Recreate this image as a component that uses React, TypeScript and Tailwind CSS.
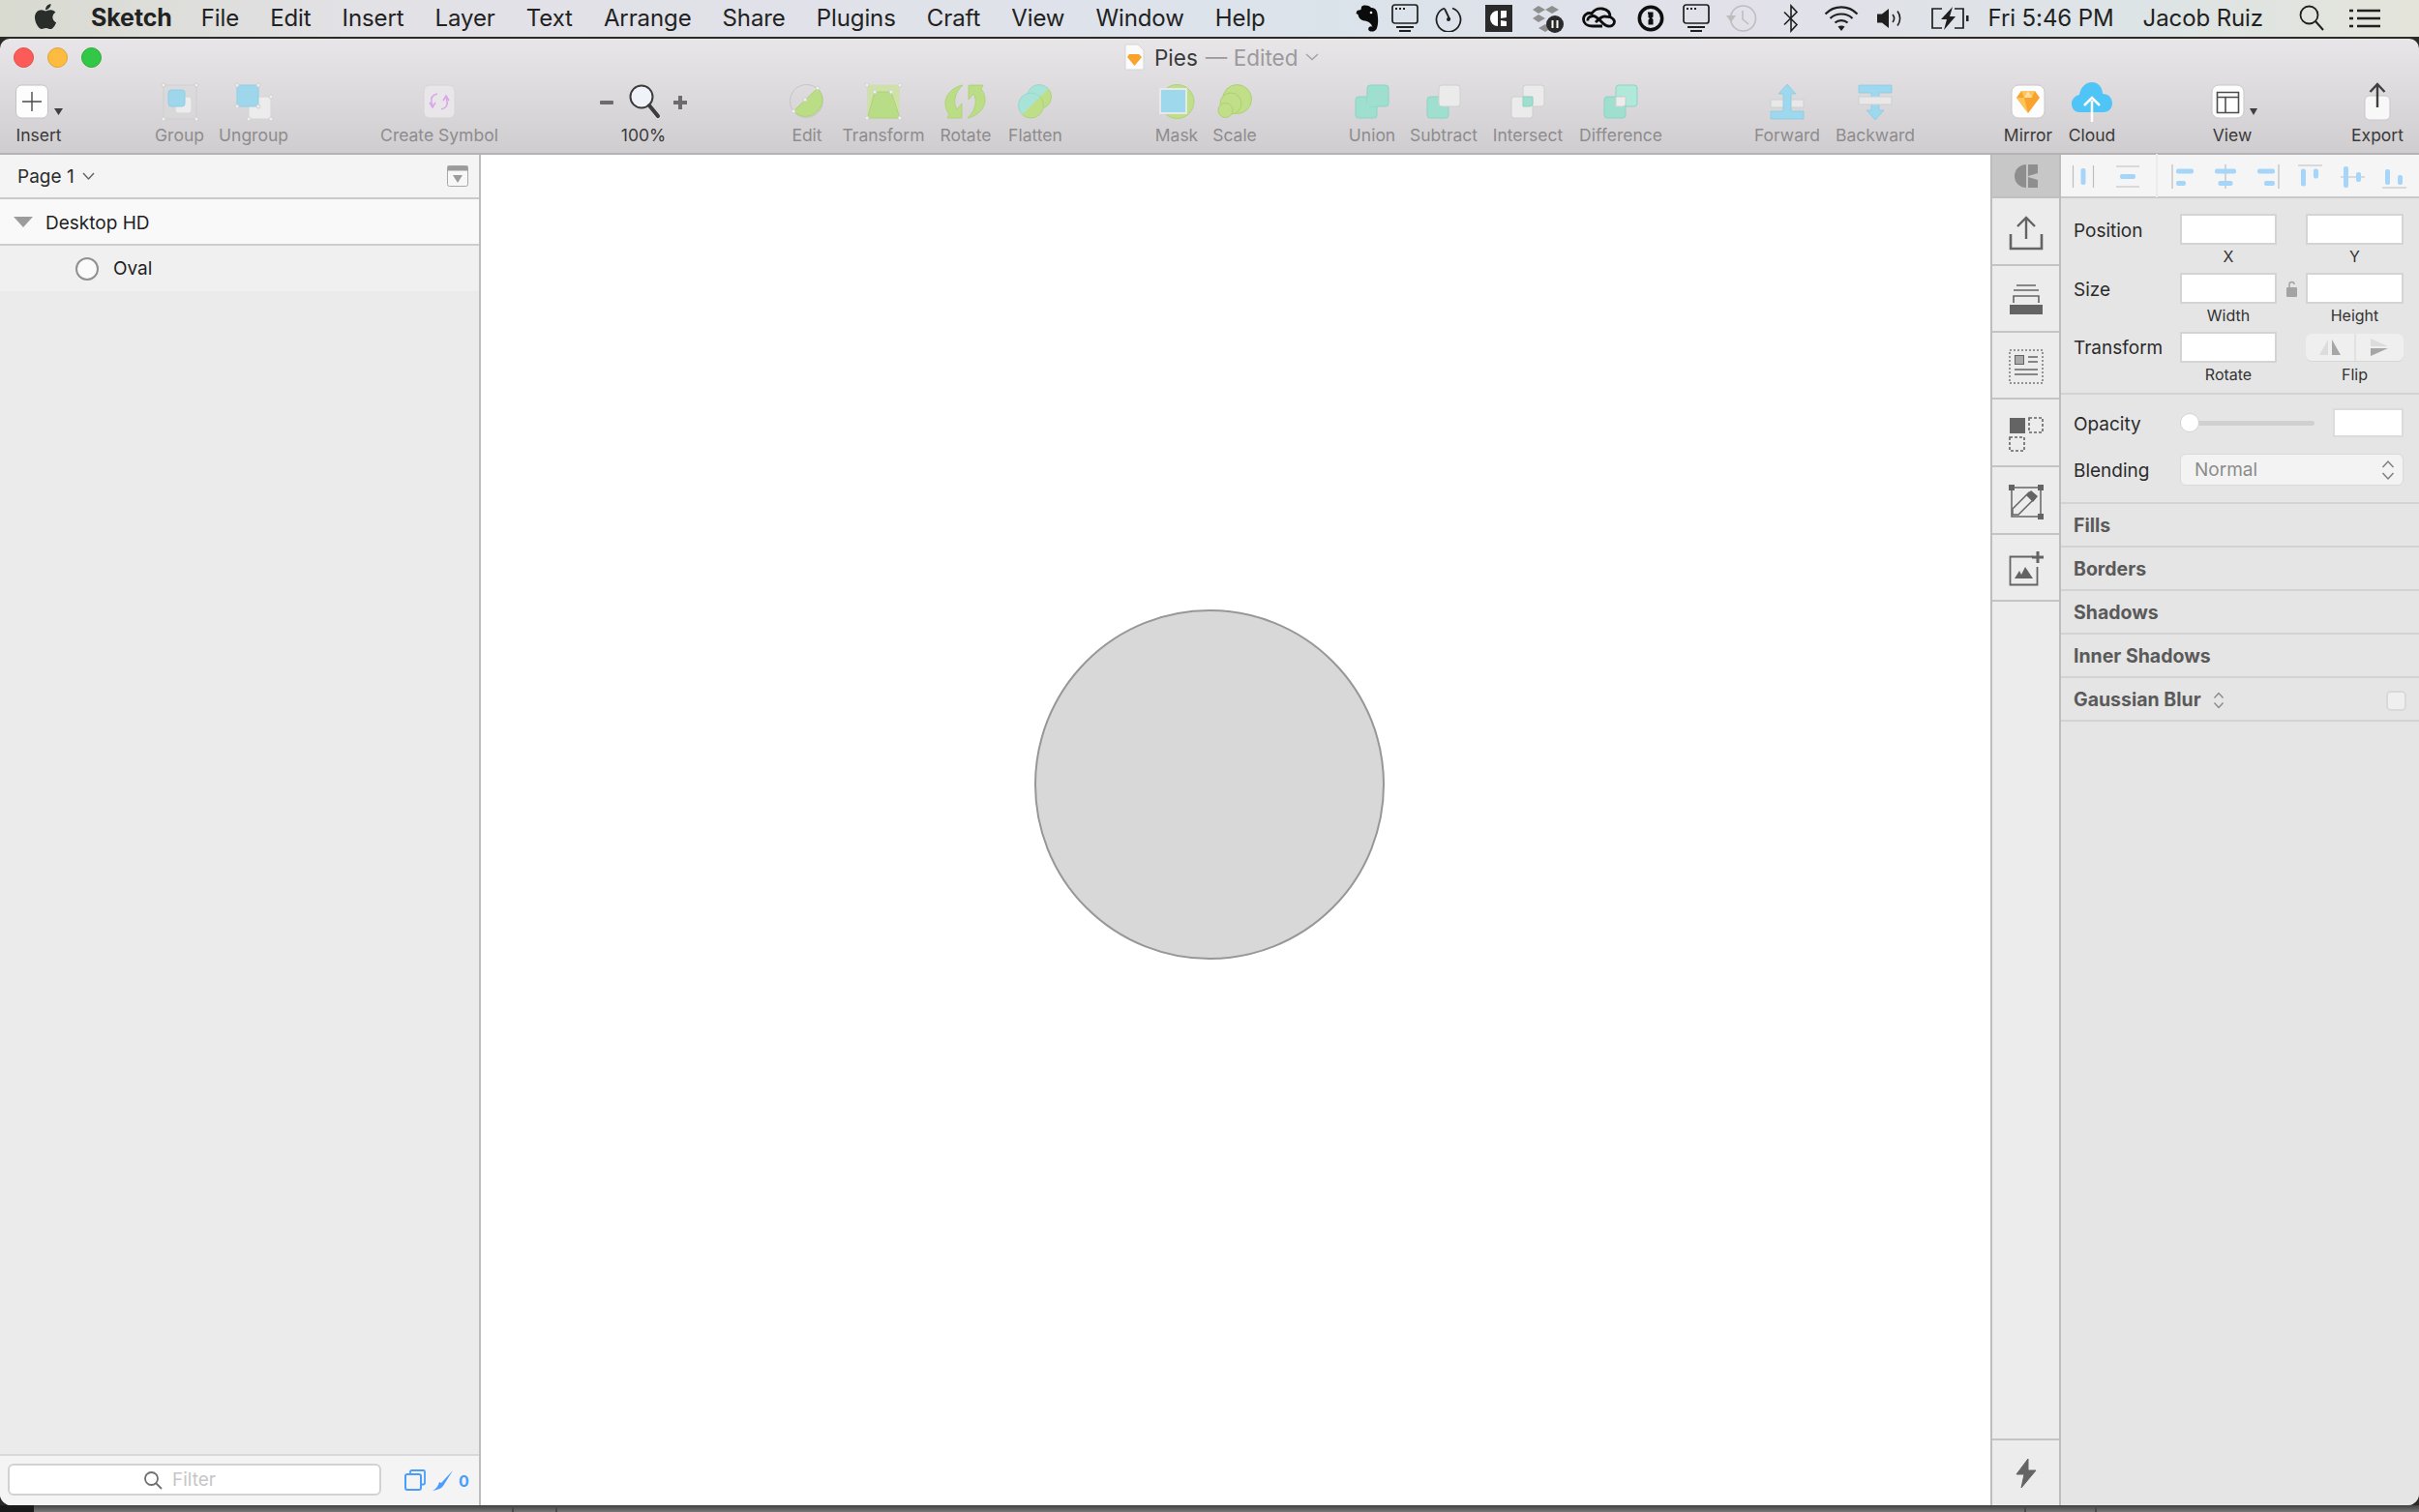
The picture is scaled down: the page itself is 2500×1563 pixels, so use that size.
import * as React from "react";
import { FaApple } from "react-icons/fa";

const ON = "text-[#3a3a3a]";
const OFF = "text-[#8e8c8e]";

function Dot({ x, y }: { x: number; y: number }) {
  return <circle cx={x} cy={y} r="2" fill="#f1f1f1" stroke="#cfcfcf" strokeWidth="1" />;
}

function Ic({ w, h, children }: { w: number; h: number; children: React.ReactNode }) {
  return (
    <svg width={w} height={h} viewBox={`0 0 ${w} ${h}`} className="block flex-none">
      {children}
    </svg>
  );
}

const InsertIcon = () => (
  <Ic w={52} h={36}>
    <rect x="2.500" y="1" width="33" height="34" rx="6" fill="#fdfdfd" stroke="#c4c2c4" />
    <path d="M19 8v20M9 18h20" stroke="#4a4a4a" strokeWidth="1.400" />
    <path d="M42 25h9l-4.500 7z" fill="#3f3f3f" />
  </Ic>
);
const GroupIcon = () => (
  <Ic w={40} h={40}>
    <rect x="3" y="3" width="34" height="35" fill="#dad9da" fillOpacity=".5" stroke="#cfcdcf" />
    <rect x="15" y="15" width="17" height="17" rx="3" fill="#ececec" stroke="#d5d5d5" />
    <rect x="8" y="8" width="17" height="17" rx="3" fill="#9ed7ec" stroke="#8fcde4" />
    <Dot x={3} y={3} /><Dot x={37} y={3} /><Dot x={3} y={38} /><Dot x={37} y={38} />
  </Ic>
);
const UngroupIcon = () => (
  <Ic w={40} h={40}>
    <rect x="15" y="15" width="23" height="23" fill="#ececec" stroke="#d5d5d5" />
    <rect x="3" y="3" width="22" height="22" rx="2" fill="#9ed7ec" stroke="#8fcde4" />
    <Dot x={3} y={3} /><Dot x={25} y={3} /><Dot x={3} y={25} /><Dot x={25} y={25} />
    <Dot x={38} y={15} /><Dot x={15} y={38} /><Dot x={38} y={38} />
  </Ic>
);
const SymbolIcon = () => (
  <Ic w={34} h={36}>
    <rect x="1" y="1" width="32" height="34" rx="6" fill="#e8e6e8" stroke="#d6d4d6" />
    <path d="M15 10c-5 1-7 4-6 9l1 4M19 26c5-1 7-4 6-9l-1-4" fill="none" stroke="#d9a6ea" strokeWidth="1.600" />
    <path d="M7 19l3 5 3-5M21 17l3-5 3 5" fill="none" stroke="#d9a6ea" strokeWidth="1.600" />
  </Ic>
);
const ZoomIcon = () => (
  <Ic w={92} h={38}>
    <rect x="1" y="18" width="14" height="4" rx="1" fill="#6d6c6d" />
    <circle cx="44" cy="14" r="11.500" fill="#f0f2fa" stroke="#3c3c3c" strokeWidth="2" />
    <path d="M52 23l9 11" stroke="#3c3c3c" strokeWidth="4" strokeLinecap="round" />
    <path d="M84 13v14M77 20h14" stroke="#6d6c6d" strokeWidth="4" />
  </Ic>
);
const EditIcon = () => (
  <Ic w={36} h={36}>
    <circle cx="17.500" cy="17.500" r="17" fill="none" stroke="#c6c5c6" strokeWidth="1" />
    <path d="M4 28L29 4A17 17 0 0 1 4 28Z" fill="#bbdd85" stroke="#acd273" />
    <Dot x={4} y={28} /><Dot x={16} y={16} /><Dot x={29} y={4} />
  </Ic>
);
const TransformIcon = () => (
  <Ic w={38} h={38}>
    <rect x="2.500" y="2" width="33" height="34" fill="#cfe2a5" stroke="#d5d7c8" />
    <path d="M10 9h17l9 27H2.500z" fill="#b9dd86" stroke="#aed27a" />
    <Dot x={2} y={2} /><Dot x={36} y={2} /><Dot x={2} y={36} /><Dot x={36} y={36} />
    <Dot x={10} y={9} /><Dot x={27} y={9} />
  </Ic>
);
const RotateIcon = () => (
  <Ic w={44} h={36}>
    <g fill="#bbdd85" stroke="#abd173" strokeWidth=".8">
      <path d="M19 1C8 3 0 12 1 21c.5 5 2 8 4 10l-2 4h15V20l-5 6c-4-6-3-17 6-25z" />
      <path transform="rotate(180 21.500 18)" d="M19 1C8 3 0 12 1 21c.5 5 2 8 4 10l-2 4h15V20l-5 6c-4-6-3-17 6-25z" />
    </g>
  </Ic>
);
const FlattenIcon = () => (
  <Ic w={36} h={36}>
    <defs>
      <clipPath id="fl1"><path d="M0 0h36L0 36z" /></clipPath>
      <clipPath id="fl2"><path d="M36 0v36H0z" /></clipPath>
    </defs>
    <g clipPath="url(#fl1)" fill="#a7e3d8" stroke="#9ad7cb">
      <circle cx="22" cy="13" r="12.500" /><circle cx="13.500" cy="22" r="13" />
    </g>
    <g clipPath="url(#fl2)" fill="#bfde88" stroke="#aed27a">
      <circle cx="22" cy="13" r="12.500" /><circle cx="13.500" cy="22" r="13" />
    </g>
  </Ic>
);
const MaskIcon = () => (
  <Ic w={38} h={36}>
    <circle cx="19.500" cy="18" r="17.500" fill="#bfdf88" stroke="#aed27a" />
    <rect x="2" y="5" width="27" height="25" fill="#9ed8ec" stroke="#e8e8e8" strokeWidth="2" />
  </Ic>
);
const ScaleIcon = () => (
  <Ic w={36} h={36}>
    <g fill="#c0df88" stroke="#abd074">
      <circle cx="20.500" cy="15.500" r="15" />
      <circle cx="14" cy="20" r="11" />
      <circle cx="8.500" cy="27" r="7.500" />
    </g>
  </Ic>
);
const TEAL = "#9fdfd0";
const UnionIcon = () => (
  <Ic w={36} h={36}>
    <g fill={TEAL} stroke="#8fd3c2">
      <rect x="1" y="13" width="22" height="22" rx="3" />
      <rect x="13" y="1" width="22" height="22" rx="3" />
    </g>
    <rect x="13" y="13" width="10" height="10" fill={TEAL} />
  </Ic>
);
const SubtractIcon = () => (
  <Ic w={36} h={36}>
    <rect x="1" y="13" width="22" height="22" rx="3" fill={TEAL} stroke="#8fd3c2" />
    <rect x="13" y="1" width="22" height="22" rx="3" fill="#ebebeb" stroke="#cfcfcf" />
  </Ic>
);
const IntersectIcon = () => (
  <Ic w={36} h={36}>
    <rect x="13" y="1" width="22" height="22" rx="3" fill="#ebebeb" stroke="#cfcfcf" />
    <rect x="1" y="13" width="22" height="22" rx="3" fill="#ebebeb" stroke="#cfcfcf" />
    <path d="M13 13h10v7a3 3 0 0 1-3 3h-7z" fill={TEAL} stroke="#8fd3c2" />
  </Ic>
);
const DifferenceIcon = () => (
  <Ic w={36} h={36}>
    <rect x="13" y="1" width="22" height="22" rx="3" fill="#b0e8da" stroke="#8fd3c2" />
    <rect x="1" y="13" width="22" height="22" rx="3" fill={TEAL} stroke="#8fd3c2" />
    <path d="M13 13h10v7a3 3 0 0 1-3 3h-7z" fill="#ececec" stroke="#cfcfcf" />
  </Ic>
);
const ForwardIcon = () => (
  <Ic w={36} h={37}>
    <rect x="1" y="16" width="34" height="8" fill="#e8e8e8" stroke="#cfcfcf" />
    <path d="M18 0l9 10h-5v18h13v8H1v-8h13V10H9z" fill="#9ed8ee" stroke="#8ccbe2" strokeWidth=".8" />
  </Ic>
);
const BackwardIcon = () => (
  <Ic w={36} h={37}>
    <path d="M1 1h34v8H22v18h5l-9 10-9-10h5V9H1z" fill="#9ed8ee" stroke="#8ccbe2" strokeWidth=".8" />
    <rect x="1" y="13" width="34" height="8" fill="#e8e8e8" stroke="#cfcfcf" />
  </Ic>
);
const MirrorIcon = () => (
  <Ic w={36} h={36}>
    <rect x="1" y="1" width="34" height="34" rx="7" fill="#fdfdfd" stroke="#c9c7c9" />
    <path d="M11 7h14l5 7-12 16L6 14z" fill="#f9a22c" />
    <path d="M11 7h14l-3 7h-8zM6 14h8l4 16z" fill="#fdc458" />
    <path d="M14 14h8l-4-7z" fill="#feddaa" />
  </Ic>
);
const CloudIcon = () => (
  <Ic w={44} h={42}>
    <path d="M22 1c7 0 11 6 11 12 6 0 10 4 10 10 0 5-4 9-9 9H9c-5 0-8-4-8-9 0-4 3-8 8-9 1-7 6-13 13-13z" fill="#4fc4f6" />
    <path d="M22 42V20M14 25l8-8 8 8" fill="none" stroke="#fff" strokeWidth="2.500" />
  </Ic>
);
const ViewIcon = () => (
  <Ic w={52} h={36}>
    <rect x="5" y="1" width="33" height="34" rx="7" fill="#fdfdfd" stroke="#c9c7c9" />
    <path d="M10.500 8.500h22v21h-22zM10.500 13.500h22M19 13.500v16" fill="none" stroke="#4d4d4d" strokeWidth="1.600" />
    <path d="M44 25h8l-4 7z" fill="#3f3f3f" />
  </Ic>
);
const ExportIcon = () => (
  <Ic w={30} h={40}>
    <rect x="2" y="14" width="26" height="25" rx="5" fill="#f8f8f8" stroke="#c9c7c9" />
    <path d="M15 26V2M7.500 10L15 2l7.500 8" fill="none" stroke="#3f3f3f" strokeWidth="2.400" />
  </Ic>
);

type Tool = { label: string; on?: boolean; w: string; gap?: string; icon: React.ReactNode };

const TOOLS: Tool[] = [
  { label: "Insert", on: true, w: "w-[80px]", icon: <InsertIcon /> },
  { label: "Group", w: "w-[77px]", gap: "ml-[67px]", icon: <GroupIcon /> },
  { label: "Ungroup", w: "w-[76px]", icon: <UngroupIcon /> },
  { label: "Create Symbol", w: "w-[140px]", gap: "ml-[84px]", icon: <SymbolIcon /> },
  { label: "100%", on: true, w: "w-[100px]", gap: "ml-[91px]", icon: <ZoomIcon /> },
  { label: "Edit", w: "w-[70px]", gap: "ml-[84px]", icon: <EditIcon /> },
  { label: "Transform", w: "w-[88px]", icon: <TransformIcon /> },
  { label: "Rotate", w: "w-[82px]", icon: <RotateIcon /> },
  { label: "Flatten", w: "w-[62px]", icon: <FlattenIcon /> },
  { label: "Mask", w: "w-[60px]", gap: "ml-[85px]", icon: <MaskIcon /> },
  { label: "Scale", w: "w-[60px]", icon: <ScaleIcon /> },
  { label: "Union", w: "w-[74px]", gap: "ml-[75px]", icon: <UnionIcon /> },
  { label: "Subtract", w: "w-[74px]", icon: <SubtractIcon /> },
  { label: "Intersect", w: "w-[100px]", icon: <IntersectIcon /> },
  { label: "Difference", w: "w-[92px]", icon: <DifferenceIcon /> },
  { label: "Forward", w: "w-[92px]", gap: "ml-[80px]", icon: <ForwardIcon /> },
  { label: "Backward", w: "w-[90px]", icon: <BackwardIcon /> },
  { label: "Mirror", on: true, w: "w-[72px]", gap: "ml-[77px]", icon: <MirrorIcon /> },
  { label: "Cloud", on: true, w: "w-[60px]", icon: <CloudIcon /> },
  { label: "View", on: true, w: "w-[80px]", gap: "ml-[75px]", icon: <ViewIcon /> },
  { label: "Export", on: true, w: "w-[80px]", gap: "ml-[70px]", icon: <ExportIcon /> },
];

const S = "#1f1f1f";

function MenuScreen() {
  return (
    <Ic w={28} h={30}>
      <rect x="1" y="1" width="26" height="19" rx="2.500" fill="none" stroke={S} strokeWidth="1.700" />
      <path d="M4 5h2M8 5h2M12 5h2" stroke={S} strokeWidth="2" />
      <path d="M5 24h18M8 28h12" stroke={S} strokeWidth="1.800" />
    </Ic>
  );
}

const StatusIcons = () => (
  <div className="flex items-center">
    <Ic w={24} h={28}>
      <path d="M6 2.500C6 1 8 .5 10 .5c3 0 5 1 6 2.500 3.500 0 6 2 6.500 6 1 6 1 11-.5 15-1 3-4 4-6.500 3.500s-3-3-1.500-4.500c1-1 3-1 3.500.5-1-4.500-4.500-6.500-8-7C5 16 3 13 2.500 10L.5 9l1-3 4-1z" fill="#0b0b0b" />
      <circle cx="16" cy="8" r="1.300" fill="#fff" />
    </Ic>
    <div className="ml-[13px]">
      <MenuScreen />
    </div>
    <div className="ml-[17px]">
      <Ic w={28} h={28}>
        <path d="M10 3.500A12.500 12.500 0 1 0 18 3.500" fill="none" stroke={S} strokeWidth="1.800" />
        <path d="M10 4l5.500 11.500" stroke={S} strokeWidth="1.800" />
        <circle cx="14" cy="15" r="2" fill={S} />
      </Ic>
    </div>
    <div className="ml-[24px]">
      <Ic w={28} h={28}>
        <rect width="28" height="28" fill="#2a2a2a" />
        <path d="M13 6a8 8 0 0 0 0 16z M16 6h6v7l-6 1zM16 16l6 1v5h-6z" fill="#fff" />
      </Ic>
    </div>
    <div className="ml-[21px]">
      <Ic w={33} h={30}>
        <g fill="#8f8f8f">
          <path d="M6 2l7 4-7 4-6-4zM20 2l7 4-7 4-7-4zM6 11l7 4-7 4-6-4zM13 21l6 4-6 4-7-4z" />
        </g>
        <circle cx="23" cy="21" r="9" fill="#2a2a2a" />
        <path d="M20.500 17v8M25.500 17v8" stroke="#fff" strokeWidth="2" />
      </Ic>
    </div>
    <div className="ml-[18px]">
      <Ic w={35} h={24}>
        <g fill="none" stroke="#0d0d0d" strokeWidth="2.800">
          <path d="M21 20H10.500C5 20 1.500 17 1.500 13 1.500 8 6 5.500 10 7 13 2.500 17 1.500 21 2c5 .8 8 4 8 8.500 3 1.500 4.500 3.500 4.500 5 0 3-3 5-6.500 4.500C21 19.500 17 9 11 9.500 7 10 5.500 12.500 6 14.500" />
          <path d="M14 16c3-3 6-6 9-6 2.500 0 4.500 .5 6 .5" />
        </g>
      </Ic>
    </div>
    <div className="ml-[22px]">
      <Ic w={28} h={28}>
        <circle cx="14" cy="14" r="11.700" fill="none" stroke="#0e0e0e" strokeWidth="3.500" />
        <path d="M11 7.500h5.500v5l-1.500 1 1.500 1.500v5.500H11.500v-5l1.500-1.500-1.500-1v-3.500H11z" fill="#0e0e0e" />
      </Ic>
    </div>
    <div className="ml-[19px]">
      <MenuScreen />
    </div>
    <div className="ml-[17px]">
      <Ic w={32} h={32}>
        <circle cx="17.500" cy="16" r="13" fill="none" stroke="#bdbdbd" strokeWidth="1.600" />
        <path d="M0 13h10l-5 7z" fill="#bdbdbd" />
        <path d="M17 8v9l6 5" fill="none" stroke="#bdbdbd" strokeWidth="1.600" />
      </Ic>
    </div>
    <div className="ml-[26px]">
      <Ic w={18} h={30}>
        <path d="M2 8.500l13 13L9 28V2l6 6.500L2 21.500" fill="none" stroke={S} strokeWidth="1.600" />
      </Ic>
    </div>
    <div className="ml-[25px]">
      <Ic w={36} h={28}>
        <g fill="none" stroke={S} strokeWidth="2.200">
          <path d="M1.500 9.500c9-9.500 24-9.500 33 0" />
          <path d="M6.500 14c6-6 17-6 23 0" />
          <path d="M11.500 18.500c3.500-3.300 9.500-3.300 13 0" />
        </g>
        <path d="M14.500 22.500c2-1.500 5-1.500 7 0L18 27z" fill={S} />
      </Ic>
    </div>
    <div className="ml-[18px]">
      <Ic w={29} h={26}>
        <path d="M1 8.500h5L13 3v20l-7-5.500H1z" fill={S} />
        <path d="M17 9c2 2.500 2 5.500 0 8M22 5.500c3.500 4.500 3.500 10.500 0 15" fill="none" stroke={S} strokeWidth="1.600" />
      </Ic>
    </div>
    <div className="ml-[27px]">
      <Ic w={40} h={26}>
        <path d="M12 3H2v20h10M25 3h9v20h-9" fill="none" stroke={S} strokeWidth="1.700" />
        <path d="M23 1L11 14h6l-3 11 12-14h-6z" fill={S} />
        <rect x="37" y="10" width="2.500" height="6" fill={S} />
      </Ic>
    </div>
  </div>
);

const MENUS = ["File", "Edit", "Insert", "Layer", "Text", "Arrange", "Share", "Plugins", "Craft", "View", "Window", "Help"];

function MenuBar() {
  return (
    <div className="h-[40px] flex-none flex items-center border-b-2 border-[#2b2a27] bg-[linear-gradient(90deg,#d9dad0_0%,#e2e1e6_15%,#e0e2ea_40%,#dbe3ea_55%,#e2e1ea_72%,#dde4e6_88%,#e4e4da_100%)] text-[24px] text-[#222] tracking-[-0.1px]">
      <FaApple className="ml-[33px] w-[28px] h-[30px] text-[#2a2e2b] mb-[4px]" />
      <span className="ml-[33px] font-bold text-[25px]">Sketch</span>
      <div className="ml-[30px] flex gap-[32px]">
        {MENUS.map((m) => (
          <span key={m}>{m}</span>
        ))}
      </div>
      <div className="ml-auto flex items-center pr-[40px]">
        <StatusIcons />
        <span className="ml-[20px]">Fri 5:46 PM</span>
        <span className="ml-[30px]">Jacob Ruiz</span>
        <div className="ml-[37px]">
          <Ic w={26} h={28}>
            <circle cx="10.500" cy="10.500" r="9" fill="none" stroke={S} strokeWidth="1.800" />
            <path d="M17 17l8 9" stroke={S} strokeWidth="2" />
          </Ic>
        </div>
        <div className="ml-[26px]">
          <Ic w={32} h={22}>
            <path d="M0 3h4M8 3h24M0 11h4M8 11h24M0 19h4M8 19h24" stroke={S} strokeWidth="2.600" />
          </Ic>
        </div>
      </div>
    </div>
  );
}

function TitleBar() {
  return (
    <div className="h-[38px] flex items-center">
      <div className="w-[1162px] flex-none flex items-center gap-[14px] pl-[14px]">
        <span className="w-[21px] h-[21px] rounded-full bg-[#fc5b57] border border-[#e14942]" />
        <span className="w-[21px] h-[21px] rounded-full bg-[#fdbc40] border border-[#de9f34]" />
        <span className="w-[21px] h-[21px] rounded-full bg-[#33c748] border border-[#27aa35]" />
      </div>
      <Ic w={21} h={28}>
        <path d="M1 1h13l6 6v20H1z" fill="#fbfbfb" stroke="#d5d5d5" />
        <path d="M5 11h10l3 3-7.500 9L3 14z" fill="#f9a22c" />
      </Ic>
      <span className="ml-[10px] pt-[1px] text-[22.500px] text-[#3a3a3a]">Pies</span>
      <span className="ml-[8px] pt-[1px] text-[22.500px] text-[#9b999b]">— Edited</span>
      <svg width="14" height="8" viewBox="0 0 14 8" className="ml-[8px]">
        <path d="M1 1l6 5.500L13 1" fill="none" stroke="#a5a3a5" strokeWidth="1.500" />
      </svg>
    </div>
  );
}

function Toolbar() {
  return (
    <div className="h-[82px] flex border-b-2 border-[#b4b2b4]">
      {TOOLS.map((t) => (
        <div key={t.label} className={`flex-none flex flex-col items-center ${t.w} ${t.gap ?? ""}`}>
          <div className="h-[50px] flex items-center justify-center pt-[4px]">{t.icon}</div>
          <span className={`mt-[1px] text-[17.500px] leading-[22px] whitespace-nowrap ${t.on ? ON : OFF}`}>{t.label}</span>
        </div>
      ))}
    </div>
  );
}

function LayerList() {
  return (
    <aside className="w-[497px] flex-none flex flex-col bg-[#ebebeb] border-r-2 border-[#bdbdbd]">
      <div className="h-[46px] flex-none flex items-center bg-[#f4f4f4] border-b-2 border-[#c9c9c9] pl-[18px] pr-[11px] text-[19px] text-[#2c2c2c]">
        <span className="pt-[2px]">Page 1</span>
        <svg width="13" height="9" viewBox="0 0 13 9" className="ml-[8px]">
          <path d="M1 1l5.500 6L12 1" fill="none" stroke="#666" strokeWidth="1.500" />
        </svg>
        <svg width="22" height="22" viewBox="0 0 22 22" className="ml-auto">
          <rect x=".5" y=".5" width="21" height="21" rx="2" fill="#f7f7f7" stroke="#a9a9a9" />
          <rect x=".5" y=".5" width="21" height="5" fill="#9b9b9b" />
          <path d="M6 10h10l-5 8z" fill="#9b9b9b" />
        </svg>
      </div>
      <div className="h-[48px] flex-none flex items-center bg-[#f9f9f9] border-b-2 border-[#cdcdcd] text-[19px] text-[#1f1f1f]">
        <svg width="20" height="11" viewBox="0 0 20 11" className="ml-[14px]">
          <path d="M0 0h20L10 11z" fill="#9c9c9c" />
        </svg>
        <span className="ml-[13px] pt-[5px]">Desktop HD</span>
      </div>
      <div className="h-[47px] flex-none flex items-center bg-[#f0f0f0] text-[19px] text-[#1f1f1f]">
        <span className="ml-[78px] w-[24px] h-[24px] rounded-full border-2 border-[#909090] bg-[#fafafa]" />
        <span className="ml-[15px] pt-[2px]">Oval</span>
      </div>
      <div className="flex-1" />
      <div className="h-[53px] flex-none flex items-start bg-[#f4f4f4] border-t-2 border-[#d9d9d9] pl-[8px] pt-[8px]">
        <div className="w-[386px] h-[33px] flex items-center gap-[10px] pl-[138px] bg-white border-2 border-[#d2d2d2] rounded-[6px]">
          <svg width="20" height="20" viewBox="0 0 20 20">
            <circle cx="8.500" cy="8.500" r="6.500" fill="none" stroke="#6f6f6f" strokeWidth="1.800" />
            <path d="M13 13l6 6" stroke="#6f6f6f" strokeWidth="1.800" />
          </svg>
          <span className="pt-[2px] text-[19px] text-[#c6c6c6]">Filter</span>
        </div>
        <svg width="22" height="22" viewBox="0 0 22 22" className="ml-[24px] mt-[6px]">
          <path d="M6 4V2.500A1.500 1.500 0 0 1 7.500 1H19.500A1.500 1.500 0 0 1 21 2.500V14a1.500 1.500 0 0 1-1.500 1.500H18" fill="none" stroke="#4a9dff" strokeWidth="1.800" />
          <rect x="1" y="5" width="16" height="16" rx="2" fill="none" stroke="#4a9dff" strokeWidth="2" />
        </svg>
        <svg width="22" height="22" viewBox="0 0 22 22" className="ml-[7px] mt-[6px]">
          <path d="M21 1L11 17c-2 3-6 4-11 5 4-2 6-5 7-9l2 1z" fill="#4a9dff" />
        </svg>
        <span className="ml-[5px] mt-[6px] text-[16px] font-bold text-[#4a9dff]">0</span>
      </div>
    </aside>
  );
}

function Tab({ children, h }: { children: React.ReactNode; h: string }) {
  return <div className={`${h} flex-none flex items-center justify-center border-b-2 border-[#c4c4c4] pt-[3px]`}>{children}</div>;
}

const G = "#646464";

function TabColumn() {
  return (
    <div className="w-[73px] flex-none flex flex-col bg-[#ececec] border-x-2 border-[#bdbdbd]">
      <div className="h-[45px] flex-none flex items-center justify-center bg-[#c7c7c7] border-b-2 border-[#c0c0c0]">
        <svg width="26" height="26" viewBox="0 0 26 26">
          <path d="M13 1A12 12 0 0 0 13 25z" fill="#8e8e8e" />
          <path d="M15 1h10v9l-10 3zM15 14l10 3v8H15z" fill="#8e8e8e" />
        </svg>
      </div>
      <Tab h="h-[70px]">
        <svg width="36" height="36" viewBox="0 0 36 36">
          <path d="M18 24V3M9 11l9-9 9 9" fill="none" stroke={G} strokeWidth="2.400" />
          <path d="M2 19v15h32V19" fill="none" stroke={G} strokeWidth="2.600" />
        </svg>
      </Tab>
      <Tab h="h-[69px]">
        <svg width="36" height="34" viewBox="0 0 36 34">
          <path d="M8 2h20M5 7h26" stroke={G} strokeWidth="1.600" />
          <path d="M5 20v-7h26v7" fill="none" stroke={G} strokeWidth="1.600" />
          <rect x="1" y="22" width="34" height="10" fill={G} />
        </svg>
      </Tab>
      <Tab h="h-[69px]">
        <svg width="36" height="36" viewBox="0 0 36 36">
          <rect x="1" y="1" width="34" height="34" fill="none" stroke="#777" strokeWidth="1.500" strokeDasharray="2 2" />
          <rect x="6.500" y="6.500" width="9" height="9" fill="#a9a9a9" stroke={G} />
          <path d="M20 8h10M20 13h10M6 21h24M6 26h24" stroke={G} strokeWidth="1.400" />
        </svg>
      </Tab>
      <Tab h="h-[70px]">
        <svg width="36" height="36" viewBox="0 0 36 36">
          <rect x="1" y="1" width="16" height="16" fill={G} />
          <rect x="21" y="1" width="14" height="15" fill="none" stroke={G} strokeWidth="1.600" strokeDasharray="3 2" />
          <rect x="1" y="21" width="15" height="14" fill="none" stroke={G} strokeWidth="1.600" strokeDasharray="3 2" />
        </svg>
      </Tab>
      <Tab h="h-[70px]">
        <svg width="36" height="36" viewBox="0 0 36 36">
          <rect x="3" y="3" width="30" height="30" fill="none" stroke={G} strokeWidth="1.500" />
          <rect x="0" y="0" width="6" height="6" fill={G} />
          <rect x="30" y="0" width="6" height="6" fill={G} />
          <rect x="30" y="30" width="6" height="6" fill={G} />
          <path d="M4 25L21 8l6 6-17 17H4z" fill="#ececec" stroke={G} strokeWidth="1.500" />
          <path d="M18 11l5-5 7 6-5 6z" fill={G} />
        </svg>
      </Tab>
      <Tab h="h-[69px]">
        <svg width="36" height="36" viewBox="0 0 36 36">
          <path d="M25 5.500H1.500v29h28V16" fill="none" stroke={G} strokeWidth="1.800" />
          <path d="M30 0v12M24 6h12" stroke={G} strokeWidth="3" />
          <path d="M6 28l5-8 2 4 4-8 8 12zM3 28h3z" fill={G} />
        </svg>
      </Tab>
      <div className="flex-1" />
      <div className="h-[69px] flex-none flex items-center justify-center border-t-2 border-[#c4c4c4]">
        <svg width="22" height="32" viewBox="0 0 22 32">
          <path d="M13 1L1 17h8l-3 14 15-18h-8z" fill={G} stroke={G} strokeLinejoin="round" />
        </svg>
      </div>
    </div>
  );
}

const BAR = "#a6d5fa";
const LINE = "#bdbdbd";

function AlignRow() {
  return (
    <div className="h-[45px] flex-none flex items-center bg-[#f5f5f5] border-b-2 border-[#c9c9c9] pl-[10px]">
      <svg width="26" height="26" viewBox="0 0 26 26">
        <path d="M2.500 2v23M23.500 2v23" stroke={LINE} strokeWidth="1.200" />
        <rect x="10.500" y="5" width="5" height="17" rx="2" fill={BAR} />
      </svg>
      <svg width="26" height="26" viewBox="0 0 26 26" className="ml-[20px]">
        <path d="M1 3h24M1 24h24" stroke={LINE} strokeWidth="1.200" />
        <rect x="5" y="11" width="16" height="5" rx="2" fill={BAR} />
      </svg>
      <div className="ml-[16px] w-[2px] h-[45px] bg-[#ececec]" />
      <svg width="26" height="26" viewBox="0 0 26 26" className="ml-[13px]">
        <path d="M2 1v25" stroke={LINE} strokeWidth="1.200" />
        <rect x="6" y="5.500" width="18" height="5" rx="2" fill={BAR} />
        <rect x="6" y="18" width="10" height="5" rx="2" fill={BAR} />
      </svg>
      <svg width="26" height="26" viewBox="0 0 26 26" className="ml-[18px]">
        <path d="M13 1v25" stroke={LINE} strokeWidth="1.200" />
        <rect x="2" y="5.500" width="22" height="5" rx="2" fill={BAR} />
        <rect x="5.500" y="18" width="15" height="5" rx="2" fill={BAR} />
      </svg>
      <svg width="26" height="26" viewBox="0 0 26 26" className="ml-[18px]">
        <path d="M24 1v25" stroke={LINE} strokeWidth="1.200" />
        <rect x="2" y="5.500" width="18" height="5" rx="2" fill={BAR} />
        <rect x="9" y="18" width="11" height="5" rx="2" fill={BAR} />
      </svg>
      <svg width="26" height="26" viewBox="0 0 26 26" className="ml-[17px]">
        <path d="M1 2h25" stroke={LINE} strokeWidth="1.200" />
        <rect x="4" y="5.500" width="5" height="18" rx="2" fill={BAR} />
        <rect x="17" y="5.500" width="5" height="10" rx="2" fill={BAR} />
      </svg>
      <svg width="26" height="26" viewBox="0 0 26 26" className="ml-[18px]">
        <path d="M1 14h25" stroke={LINE} strokeWidth="1.200" />
        <rect x="4" y="3" width="5" height="22" rx="2" fill={BAR} />
        <rect x="17" y="9" width="5" height="10" rx="2" fill={BAR} />
      </svg>
      <svg width="26" height="26" viewBox="0 0 26 26" className="ml-[17px]">
        <path d="M1 25h25" stroke={LINE} strokeWidth="1.200" />
        <rect x="4" y="6" width="5" height="16" rx="2" fill={BAR} />
        <rect x="17" y="12" width="5" height="10" rx="2" fill={BAR} />
      </svg>
    </div>
  );
}

const FIELD = "h-[32px] bg-white border-2 border-[#d4d4d4]";

function FieldLabel({ children }: { children: React.ReactNode }) {
  return <div className="text-center text-[16px] leading-[25px] pb-[4px] text-[#333]">{children}</div>;
}

function Geometry() {
  return (
    <div className="grid grid-cols-[110px_100px_30px_101px] pl-[13px] pt-[16px] pb-[2px] border-b-2 border-[#d3d3d3] text-[19px] text-[#2b2b2b] items-start">
      <div className="leading-[30px] pt-[3px]">Position</div>
      <div>
        <div className={FIELD} />
        <FieldLabel>X</FieldLabel>
      </div>
      <div />
      <div>
        <div className={FIELD} />
        <FieldLabel>Y</FieldLabel>
      </div>

      <div className="leading-[30px] pt-[3px]">Size</div>
      <div>
        <div className={FIELD} />
        <FieldLabel>Width</FieldLabel>
      </div>
      <div className="h-[32px] flex items-center justify-center">
        <svg width="11" height="17" viewBox="0 0 11 17">
          <path d="M3 7V4a2.500 2.500 0 0 1 5 0" fill="none" stroke="#a3a3a3" strokeWidth="1.500" />
          <rect y="7" width="11" height="10" rx="1" fill="#a3a3a3" />
        </svg>
      </div>
      <div>
        <div className={FIELD} />
        <FieldLabel>Height</FieldLabel>
      </div>

      <div className="leading-[30px] pt-[2px]">Transform</div>
      <div>
        <div className={FIELD} />
        <FieldLabel>Rotate</FieldLabel>
      </div>
      <div />
      <div>
        <div className="mt-[2px] h-[28px] mb-[2px] flex rounded-[6px] bg-[#efefef] shadow-[0_1px_0_#d6d6d6]">
          <div className="flex-1 flex items-center justify-center border-r-2 border-[#e2e2e2]">
            <svg width="24" height="18" viewBox="0 0 24 18">
              <path d="M10 1L1 17h9z" fill="#dcdcdc" />
              <path d="M14 1l9 16h-9z" fill="#a6a6a6" />
            </svg>
          </div>
          <div className="flex-1 flex items-center justify-center">
            <svg width="22" height="20" viewBox="0 0 22 20">
              <path d="M2 1l18 8H2z" fill="#dcdcdc" />
              <path d="M2 19l18-8H2z" fill="#a6a6a6" />
            </svg>
          </div>
        </div>
        <FieldLabel>Flip</FieldLabel>
      </div>
    </div>
  );
}

function Appearance() {
  return (
    <div className="h-[113px] flex-none border-b-2 border-[#d3d3d3] pl-[13px] pr-[14px] pt-[14px] text-[19px] text-[#2b2b2b]">
      <div className="h-[30px] flex items-center">
        <span className="w-[110px] pt-[5px]">Opacity</span>
        <div className="relative w-[139px] h-[5px] rounded-full bg-[#d0d0d0]">
          <span className="absolute left-0 top-[-8px] w-[20px] h-[20px] rounded-full bg-white border border-[#d4d4d4]" />
        </div>
        <div className="ml-[19px] w-[73px] h-[30px] bg-white border-2 border-[#dcdcdc]" />
      </div>
      <div className="mt-[17px] h-[33px] flex items-center">
        <span className="w-[110px] pt-[4px]">Blending</span>
        <div className="w-[231px] h-[33px] flex items-center justify-between pl-[14px] pr-[8px] rounded-[6px] bg-[#f3f3f3] border border-[#dadada] text-[#8c8c8c]">
          <span className="pt-[2px]">Normal</span>
          <svg width="14" height="22" viewBox="0 0 14 22">
            <path d="M1.500 8L7 2l5.500 6M1.500 14L7 20l5.500-6" fill="none" stroke="#7f7f7f" strokeWidth="1.500" />
          </svg>
        </div>
      </div>
    </div>
  );
}

function Section({ children }: { children: React.ReactNode }) {
  return (
    <div className="h-[45px] flex-none flex items-center pl-[13px] pr-[13px] pt-[3px] border-b-2 border-[#d3d3d3] text-[19.500px] font-bold text-[#5a5a5a]">
      {children}
    </div>
  );
}

function Inspector() {
  return (
    <div className="w-[370px] flex-none flex flex-col bg-[#e5e5e5]">
      <AlignRow />
      <Geometry />
      <Appearance />
      <Section>Fills</Section>
      <Section>Borders</Section>
      <Section>Shadows</Section>
      <Section>Inner Shadows</Section>
      <Section>
        <span>Gaussian Blur</span>
        <svg width="12" height="20" viewBox="0 0 12 20" className="ml-[12px]">
          <path d="M1.500 7.500L6 2.500l4.500 5M1.500 12.500L6 17.500l4.500-5" fill="none" stroke="#8a8a8a" strokeWidth="1.400" />
        </svg>
        <span className="ml-auto w-[21px] h-[21px] rounded-[5px] bg-[#efefef] border-2 border-[#d9d9d9]" />
      </Section>
    </div>
  );
}

export default function App() {
  return (
    <div className="w-[2500px] h-[1563px] overflow-hidden flex flex-col bg-[#2b2a27] font-['Inter','Liberation_Sans',sans-serif]">
      <MenuBar />
      <div className="flex-1 min-h-0 flex flex-col overflow-hidden rounded-t-[10px] rounded-b-[12px] bg-[linear-gradient(180deg,#e8e6e9_0px,#cfcdcf_119px)]">
        <TitleBar />
        <Toolbar />
        <div className="flex-1 min-h-0 flex">
          <LayerList />
          <main className="relative flex-1 bg-white">
            <div className="absolute left-[572px] top-[470px] w-[362px] h-[362px] rounded-full bg-[#d8d8d8] border-2 border-[#979797]" />
          </main>
          <TabColumn />
          <Inspector />
        </div>
      </div>
      <div className="h-[7px] flex-none flex bg-[linear-gradient(180deg,#3f3f3f,#787878)]">
        <div className="w-[35px] bg-[#1a1a1a]" />
        <div className="ml-[494px] w-[2px] bg-[#4a4a4a]" />
        <div className="ml-[43px] w-[2px] bg-[#4a4a4a]" />
        <div className="ml-[1516px] w-[2px] bg-[#4a4a4a]" />
        <div className="ml-[71px] w-[2px] bg-[#4a4a4a]" />
      </div>
    </div>
  );
}
